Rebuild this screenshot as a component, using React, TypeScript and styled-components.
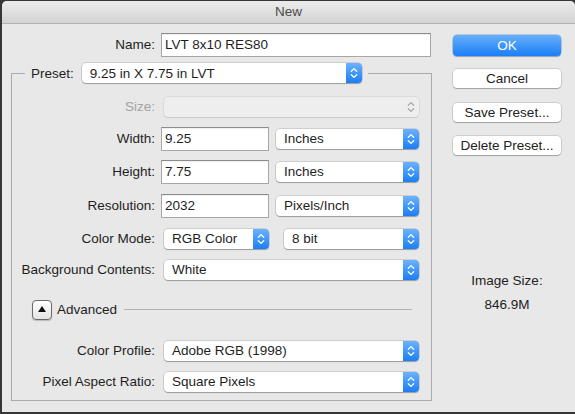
import React, { FunctionComponent } from 'react';
import styled, { createGlobalStyle } from 'styled-components';

const GlobalStyle = createGlobalStyle`
  html, body {
    margin: 0;
    padding: 0;
  }
  body {
    background: #363636;
    font-family: "Liberation Sans", Arial, sans-serif;
    font-size: 13.5px;
    color: #1e1e1e;
  }
  * {
    box-sizing: border-box;
  }
`;

type PopupProps = {
  value: string;
  width: number;
  offset?: number;
  disabled?: boolean;
};

const Chevrons: FunctionComponent<{ color: string }> = ({ color }) => (
  <svg width="16" height="20" viewBox="0 0 16 20">
    <path d="M5.3 8.2 L8 5.6 L10.7 8.2" fill="none" stroke={color} strokeWidth="1.3" strokeLinecap="round" strokeLinejoin="round" />
    <path d="M5.3 11.8 L8 14.4 L10.7 11.8" fill="none" stroke={color} strokeWidth="1.3" strokeLinecap="round" strokeLinejoin="round" />
  </svg>
);

const Popup: FunctionComponent<PopupProps> = ({ value, width, offset = 3, disabled }) => (
  <PopupBox $width={width} $offset={offset} $disabled={disabled}>
    <PopupText>{value}</PopupText>
    <ArrowBox $disabled={disabled}>
      <Chevrons color={disabled ? '#a8a8a8' : '#ffffff'} />
    </ArrowBox>
  </PopupBox>
);

const Field: FunctionComponent<{ label: string; top: number; dim?: boolean; children: React.ReactNode }> = ({
  label,
  top,
  dim,
  children,
}) => (
  <Row $top={top}>
    <Label $width={143} $dim={dim}>{label}</Label>
    {children}
  </Row>
);

export const App: FunctionComponent<{}> = () => (
  <Screen>
    <GlobalStyle />
    <Window>
      <TitleBar>New</TitleBar>
      <Body>
        <MainColumn>
          <NameRow>
            <Label $width={153}>Name:</Label>
            <TextInput $width={270}>LVT 8x10 RES80</TextInput>
          </NameRow>

          <Fieldset>
            <Legend>
              <LegendLabel>Preset:</LegendLabel>
              <Popup value="9.25 in X 7.75 in LVT" width={280} offset={0} />
            </Legend>

            <Rows>
              <Field label="Size:" top={0} dim>
                <Popup value="" width={255} disabled />
              </Field>
              <Field label="Width:" top={7}>
                <TextInput $width={108}>9.25</TextInput>
                <Popup value="Inches" width={143} offset={7} />
              </Field>
              <Field label="Height:" top={8}>
                <TextInput $width={108}>7.75</TextInput>
                <Popup value="Inches" width={143} offset={7} />
              </Field>
              <Field label="Resolution:" top={9}>
                <TextInput $width={108}>2032</TextInput>
                <Popup value="Pixels/Inch" width={143} offset={7} />
              </Field>
              <Field label="Color Mode:" top={8}>
                <Popup value="RGB Color" width={105} />
                <Popup value="8 bit" width={135} offset={15} />
              </Field>
              <Field label="Background Contents:" top={6}>
                <Popup value="White" width={255} />
              </Field>

              <AdvancedRow>
                <DisclosureButton>
                  <svg width="8" height="6" viewBox="0 0 8 6">
                    <polygon points="4,0 8,6 0,6" fill="#111" />
                  </svg>
                </DisclosureButton>
                <AdvancedText>Advanced</AdvancedText>
                <Rule />
              </AdvancedRow>

              <Field label="Color Profile:" top={16}>
                <Popup value="Adobe RGB (1998)" width={255} />
              </Field>
              <Field label="Pixel Aspect Ratio:" top={6}>
                <Popup value="Square Pixels" width={255} />
              </Field>
            </Rows>
          </Fieldset>
        </MainColumn>

        <SideColumn>
          <Button $primary $top={11}>OK</Button>
          <Button $top={13}>Cancel</Button>
          <Button $top={15}>Save Preset...</Button>
          <Button $top={14}>Delete Preset...</Button>
          <InfoLabel>Image Size:</InfoLabel>
          <InfoValue>846.9M</InfoValue>
        </SideColumn>
      </Body>
    </Window>
  </Screen>
);

const Screen = styled.div`
  width: 575px;
  height: 414px;
  padding: 1px 0 0 2px;
  background: #363636;
  overflow: hidden;
`;

const Window = styled.div`
  width: 573px;
  height: 411px;
  display: flex;
  flex-direction: column;
  background: #e8e8e8;
  border-radius: 5px 5px 0 0;
`;

const TitleBar = styled.div`
  flex: none;
  height: 23px;
  display: flex;
  align-items: center;
  justify-content: center;
  padding-bottom: 1px;
  background: linear-gradient(#ececec, #d3d3d3);
  border-bottom: 1px solid #b3b3b3;
  border-radius: 5px 5px 0 0;
  color: #4b4b4b;
  font-size: 13.5px;
`;

const Body = styled.div`
  flex: 1;
  display: flex;
`;

const MainColumn = styled.div`
  width: 439px;
  padding-top: 9px;
`;

const NameRow = styled.div`
  display: flex;
  align-items: center;
  height: 23px;
`;

const Label = styled.div<{ $width: number; $dim?: boolean }>`
  flex: none;
  width: ${(p) => p.$width}px;
  margin-right: 6px;
  text-align: right;
  white-space: nowrap;
  color: ${(p) => (p.$dim ? '#a3a3a3' : '#1e1e1e')};
`;

const TextInput = styled.div<{ $width: number }>`
  flex: none;
  width: ${(p) => p.$width}px;
  height: 24px;
  display: flex;
  align-items: center;
  padding: 0 3px;
  background: #ffffff;
  border: 1px solid #a6a6a6;
  border-top-color: #8c8c8c;
  box-shadow: inset 0 1px 0 rgba(0, 0, 0, 0.06);
  white-space: nowrap;
`;

const Fieldset = styled.fieldset`
  width: 421px;
  margin: 7px 0 0 9px;
  padding: 0 0 6px 0;
  border: 1px solid #ababab;
  min-width: 0;
`;

const Legend = styled.legend`
  display: flex;
  align-items: center;
  margin-left: 13px;
  padding: 0 6px;
  height: 20px;
`;

const LegendLabel = styled.span`
  margin-right: 8px;
`;

const Rows = styled.div`
  display: flex;
  flex-direction: column;
  padding-top: 11px;
`;

const Row = styled.div<{ $top: number }>`
  display: flex;
  align-items: center;
  height: 25px;
  margin-top: ${(p) => p.$top}px;
`;

const PopupBox = styled.div<{ $width: number; $offset: number; $disabled?: boolean }>`
  flex: none;
  position: relative;
  width: ${(p) => p.$width}px;
  height: 20px;
  margin-left: ${(p) => p.$offset}px;
  display: flex;
  align-items: center;
  border-radius: 4px;
  background: ${(p) => (p.$disabled ? '#eeeeee' : '#ffffff')};
  box-shadow: ${(p) =>
    p.$disabled
      ? '0 0 0 0.5px rgba(0, 0, 0, 0.12), 0 1px 1px rgba(0, 0, 0, 0.08)'
      : '0 0 0 0.5px rgba(0, 0, 0, 0.22), 0 1px 1px rgba(0, 0, 0, 0.25)'};
`;

const PopupText = styled.span`
  flex: 1;
  padding-left: 8px;
  white-space: nowrap;
  overflow: hidden;
`;

const ArrowBox = styled.div<{ $disabled?: boolean }>`
  flex: none;
  width: 16px;
  height: 20px;
  display: flex;
  border-radius: 0 4px 4px 0;
  background: ${(p) => (p.$disabled ? 'transparent' : 'linear-gradient(#6cb2fc, #1a7ef5)')};
`;

const AdvancedRow = styled.div`
  display: flex;
  align-items: center;
  height: 25px;
  margin-top: 15px;
  padding: 0 19px 0 20px;
`;

const DisclosureButton = styled.div`
  flex: none;
  width: 20px;
  height: 20px;
  display: flex;
  align-items: center;
  justify-content: center;
  padding-bottom: 1px;
  border: 1px solid #6a6a6a;
  border-radius: 4px;
  background: linear-gradient(#ffffff, #e4e4e4);
  box-shadow: 0 1px 1px rgba(0, 0, 0, 0.2);
`;

const AdvancedText = styled.span`
  margin-left: 5px;
`;

const Rule = styled.div`
  flex: 1;
  height: 1px;
  margin-left: 7px;
  background: #b3b3b3;
`;

const SideColumn = styled.div`
  width: 108px;
  margin-left: 12px;
  display: flex;
  flex-direction: column;
  align-items: stretch;
  text-align: center;
`;

const Button = styled.div<{ $primary?: boolean; $top: number }>`
  height: ${(p) => (p.$primary ? 21 : 19)}px;
  margin-top: ${(p) => p.$top}px;
  display: flex;
  align-items: center;
  justify-content: center;
  border-radius: 4px;
  white-space: nowrap;
  color: ${(p) => (p.$primary ? '#ffffff' : '#222222')};
  background: ${(p) => (p.$primary ? 'linear-gradient(#67affb, #1a7ff6)' : '#ffffff')};
  box-shadow: ${(p) =>
    p.$primary
      ? '0 0 0 0.5px rgba(0, 60, 160, 0.4), 0 1px 1px rgba(0, 0, 0, 0.2)'
      : '0 0 0 0.5px rgba(0, 0, 0, 0.22), 0 1px 1px rgba(0, 0, 0, 0.22)'};
`;

const InfoLabel = styled.div`
  margin-top: 118px;
  line-height: 16px;
`;

const InfoValue = styled.div`
  margin-top: 8px;
  line-height: 16px;
`;

export default App;
